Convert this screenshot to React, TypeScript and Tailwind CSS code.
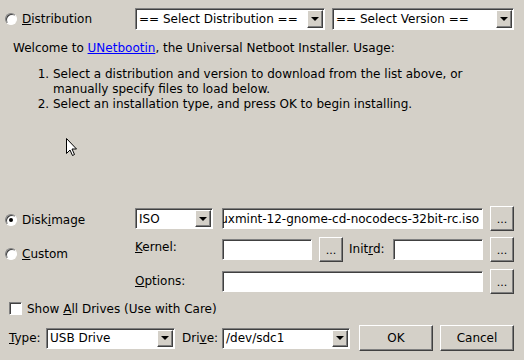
import React from 'react';

const sunken =
  'bg-white border border-t-[#808080] border-l-[#808080] border-b-white border-r-white shadow-[inset_1px_1px_0_#404040]';
const raised =
  'bg-[#d4d0c8] border border-t-white border-l-white border-b-[#404040] border-r-[#404040] shadow-[inset_-1px_-1px_0_#808080]';

const Combo: React.FC<{ value: string; className?: string }> = ({ value, className = '' }) => (
  <div className={`${sunken} flex items-stretch ${className}`}>
    <div className="flex-1 pl-[3px] flex items-center whitespace-nowrap overflow-hidden">{value}</div>
    <div className={`${raised} w-[16px] m-[1px] flex items-center justify-center`}>
      <div className="w-0 h-0 border-l-[4px] border-r-[4px] border-t-[4px] border-l-transparent border-r-transparent border-t-black" />
    </div>
  </div>
);

const Field: React.FC<{ value?: string; className?: string }> = ({ value = '', className = '' }) => (
  <div className={`${sunken} flex items-center justify-end pr-[3px] whitespace-nowrap overflow-hidden ${className}`}>
    <span className="shrink-0">{value}</span>
  </div>
);

const Dots: React.FC = () => (
  <div className={`${raised} w-[24px] h-[25px] ml-[7px] flex items-end justify-center pb-[5px] text-[11px] leading-none`}>
    ...
  </div>
);

const Radio: React.FC<{ checked?: boolean }> = ({ checked }) => (
  <div className="w-[12px] h-[12px] rounded-full bg-white border border-t-[#808080] border-l-[#808080] border-b-white border-r-white shadow-[inset_1px_1px_0_#404040] flex items-center justify-center">
    {checked && <div className="w-[4px] h-[4px] rounded-full bg-black" />}
  </div>
);

export default function App() {
  return (
    <div className="relative w-[524px] h-[360px] bg-[#d4d0c8] text-black text-[12px] font-['DejaVu_Sans',sans-serif] flex flex-col overflow-hidden">
      {/* distribution row */}
      <div className="h-[38px] flex items-center pl-[5px] pr-[10px]">
        <div className="w-[130px] flex items-center gap-[5px]">
          <Radio />
          <span>
            <u>D</u>istribution
          </span>
        </div>
        <Combo value="== Select Distribution ==" className="w-[190px] h-[22px]" />
        <Combo value="== Select Version ==" className="w-[182px] h-[22px] ml-[7px]" />
      </div>

      {/* usage text */}
      <div className="pl-[13px] pr-[50px] mt-[3px] leading-[15px]">
        <div>
          Welcome to <span className="text-[#0000ff] underline">UNetbootin</span>, the Universal Netboot Installer. Usage:
        </div>
        <ol className="mt-[11px] pl-[40px] list-decimal">
          <li>
            Select a distribution and version to download from the list above, or manually specify files to load
            below.
          </li>
          <li>Select an installation type, and press OK to begin installing.</li>
        </ol>
      </div>

      <div className="flex-1" />

      {/* install type section */}
      <div className="flex">
        <div className="w-[135px] pl-[5px] flex flex-col">
          <div className="h-[27px] mt-[2px] flex items-center gap-[5px]">
            <Radio checked />
            <span>
              Disk<u>i</u>mage
            </span>
          </div>
          <div className="h-[27px] mt-[7px] flex items-center gap-[5px]">
            <Radio />
            <span>
              <u>C</u>ustom
            </span>
          </div>
        </div>
        <div className="flex flex-col">
          <div className="h-[29px] flex items-center">
            <Combo value="ISO" className="w-[78px] h-[21px]" />
            <Field value="linuxmint-12-gnome-cd-nocodecs-32bit-rc.iso" className="w-[261px] h-[21px] ml-[9px]" />
            <Dots />
          </div>
          <div className="h-[32px] flex items-center">
            <div className="w-[87px] -mt-[5px]">
              <u>K</u>ernel:
            </div>
            <Field className="w-[90px] h-[21px]" />
            <Dots />
            <div className="w-[50px] pl-[6px]">
              Init<u>r</u>d:
            </div>
            <Field className="w-[90px] h-[21px]" />
            <Dots />
          </div>
          <div className="h-[32px] flex items-center">
            <div className="w-[87px]">
              <u>O</u>ptions:
            </div>
            <Field className="w-[261px] h-[21px]" />
            <Dots />
          </div>
        </div>
      </div>

      <div className="h-[23px] flex items-center pl-[9px] gap-[5px]">
        <div className="w-[13px] h-[13px] bg-white border border-t-[#808080] border-l-[#808080] border-b-white border-r-white shadow-[inset_1px_1px_0_#404040]" />
        <span>
          Show <u>A</u>ll Drives (Use with Care)
        </span>
      </div>

      <div className="h-[36px] flex items-center pl-[9px] mb-[4px]">
        <span className="w-[37px]">
          <u>T</u>ype:
        </span>
        <Combo value="USB Drive" className="w-[129px] h-[21px]" />
        <span className="w-[47px] pl-[7px]">
          Dri<u>v</u>e:
        </span>
        <Combo value="/dev/sdc1" className="w-[128px] h-[21px]" />
        <button className={`${raised} w-[74px] h-[26px] ml-[9px]`}>OK</button>
        <button className={`${raised} w-[74px] h-[26px] ml-[7px]`}>Cancel</button>
      </div>

      {/* mouse pointer */}
      <svg className="absolute left-[66px] top-[138px]" width="12" height="19" viewBox="0 0 12 19">
        <path d="M0.5 0.5 L0.5 15.5 L4 12 L6.5 17.5 L8.5 16.5 L6 11 L10.5 11 Z" fill="white" stroke="black" strokeWidth="1" />
      </svg>
    </div>
  );
}
